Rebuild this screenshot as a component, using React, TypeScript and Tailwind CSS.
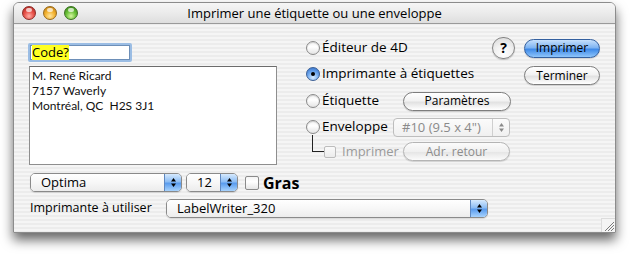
import React from "react";

const ui = "font-['Open_Sans','DejaVu_Sans',sans-serif]";

function Light({ color }: { color: "red" | "yellow" | "green" }) {
  const bg =
    color === "red"
      ? "bg-[radial-gradient(circle_at_50%_75%,#ffb0a8_0%,#e8524a_45%,#a8221c_100%)] border-[#8c2a26]"
      : color === "yellow"
      ? "bg-[radial-gradient(circle_at_50%_75%,#ffe6a0_0%,#f4b331_45%,#b8760c_100%)] border-[#96681a]"
      : "bg-[radial-gradient(circle_at_50%_75%,#d6f7a0_0%,#6cc23a_45%,#2f7e12_100%)] border-[#3a7020]";
  return (
    <div className={`relative w-[14px] h-[14px] rounded-full border ${bg}`}>
      <div className="absolute left-[3px] top-[1px] w-[6px] h-[4px] rounded-full bg-white/70" />
    </div>
  );
}

function Radio({ checked }: { checked?: boolean }) {
  return (
    <div
      className={`w-[14px] h-[14px] shrink-0 rounded-full border flex items-center justify-center ${
        checked
          ? "border-[#3b5f95] bg-[radial-gradient(circle_at_50%_80%,#d8ecff_0%,#6fa8ee_50%,#2c69c4_100%)]"
          : "border-[#8a8a8a] bg-[linear-gradient(180deg,#f2f2f2_0%,#ffffff_40%,#e4e4e4_100%)] shadow-[inset_0_1px_1px_rgba(0,0,0,0.15)]"
      }`}
    >
      {checked && <div className="w-[4px] h-[4px] rounded-full bg-black" />}
    </div>
  );
}

function Button({
  children,
  w,
  primary,
  disabled,
}: {
  children: React.ReactNode;
  w: string;
  primary?: boolean;
  disabled?: boolean;
}) {
  const style = primary
    ? "border-[#34609f] bg-[linear-gradient(180deg,#c6e0fc_0%,#7fb4f2_45%,#3f8ae8_55%,#8ec5fb_100%)] text-black"
    : disabled
    ? "border-[#b4b4b4] bg-[linear-gradient(180deg,#fbfbfb_0%,#f0f0f0_50%,#e6e6e6_55%,#fbfbfb_100%)] text-[#8c8c8c]"
    : "border-[#7d7d7d] bg-[linear-gradient(180deg,#ffffff_0%,#f2f2f2_45%,#e2e2e2_55%,#ffffff_100%)] text-black";
  return (
    <div
      className={`${w} h-[19px] shrink-0 rounded-full border flex items-center justify-center text-[12px] leading-none shadow-[0_1px_1px_rgba(0,0,0,0.15)] ${style}`}
    >
      {children}
    </div>
  );
}

function Arrows({ color = "#000" }: { color?: string }) {
  return (
    <svg width="7" height="11" viewBox="0 0 7 11">
      <path d="M3.5 1 L6 4.5 L1 4.5 Z" fill={color} />
      <path d="M3.5 10 L6 6.5 L1 6.5 Z" fill={color} />
    </svg>
  );
}

function Popup({ w, text }: { w: string; text: string }) {
  return (
    <div
      className={`${w} h-[19px] flex rounded-[5px] border border-[#8a8a8a] shadow-[0_1px_1px_rgba(0,0,0,0.12)] overflow-hidden`}
    >
      <div className="flex-1 flex items-center pl-[10px] text-[13px] leading-none bg-[linear-gradient(180deg,#ffffff_0%,#f7f7f7_50%,#ececec_100%)] text-black">
        {text}
      </div>
      <div className="w-[17px] border-l border-[#5f88c0] flex items-center justify-center bg-[linear-gradient(180deg,#d6eafe_0%,#8dbdf4_45%,#5a9cee_55%,#a8d3fd_100%)]">
        <Arrows />
      </div>
    </div>
  );
}

export default function App() {
  return (
    <div className={`w-[630px] h-[256px] bg-white pt-[2px] pl-[13px] ${ui}`}>
      <div className="relative w-[603px] h-[231px] flex flex-col rounded-t-[6px] border border-[#8c8c8c] shadow-[0_7px_12px_rgba(0,0,0,0.6)] bg-[repeating-linear-gradient(180deg,#ececec_0px,#ececec_2px,#f5f5f5_2px,#f5f5f5_4px)] overflow-hidden">
        {/* title bar */}
        <div className="h-[21px] shrink-0 grid grid-cols-[1fr_auto_1fr] items-center border-b border-[#9a9a9a] bg-[linear-gradient(180deg,#f6f6f6_0%,#ebebeb_50%,#dedede_100%)]">
          <div className="flex items-center gap-[7px] pl-[8px]">
            <Light color="red" />
            <Light color="yellow" />
            <Light color="green" />
          </div>
          <div className="text-[13px] leading-none text-black">
            Imprimer une étiquette ou une enveloppe
          </div>
          <div />
        </div>

        {/* content */}
        <div className="flex flex-col pl-[14px] pr-[15px] pt-[13px]">
          <div className="flex items-start">
            {/* left column */}
            <div className="w-[249px] shrink-0 flex flex-col mt-[6px]">
              <div className="w-[104px] h-[19px] border-[2px] border-[#9bbde4] rounded-[2px] bg-white flex items-center">
                <div className="w-full h-full border border-[#6d8fb8] flex items-center pl-[1px]">
                  <span className="bg-[#ffff22] text-[13px] leading-[15px] text-black">Code?</span>
                </div>
              </div>
              <div className="ml-[1px] mt-[4px] w-[248px] h-[99px] bg-white border border-[#8e8e8e] border-t-[#6c6c6c] pl-[2px] pt-[1px] font-['Lato','Open_Sans',sans-serif] text-[12px] leading-[15px] text-[#111]">
                <div>M. René Ricard</div>
                <div>7157 Waverly</div>
                <div>Montréal, QC&nbsp; H2S 3J1</div>
              </div>
            </div>

            {/* options + buttons */}
            <div className="ml-[29px] flex-1 flex flex-col text-[13.5px] leading-none text-black">
              <div className="h-[20px] mt-[1px] flex items-center">
                <Radio />
                <span className="ml-[2px]">Éditeur de 4D</span>
                <div className="ml-auto w-[23px] h-[22px] rounded-full border border-[#858585] bg-[radial-gradient(circle_at_50%_80%,#ffffff_0%,#f0f0f0_50%,#d6d6d6_100%)] shadow-[0_1px_1px_rgba(0,0,0,0.2)] flex items-center justify-center text-[14px] font-bold leading-none text-black">
                  ?
                </div>
                <div className="ml-[9px]">
                  <Button w="w-[76px]" primary>
                    Imprimer
                  </Button>
                </div>
              </div>
              <div className="h-[20px] mt-[6px] flex items-center">
                <Radio checked />
                <span className="ml-[2px]">Imprimante à étiquettes</span>
                <div className="ml-auto mt-[3px]">
                  <Button w="w-[76px]">Terminer</Button>
                </div>
              </div>
              <div className="h-[20px] mt-[7px] flex items-center">
                <div className="w-[97px] flex items-center">
                  <Radio />
                  <span className="ml-[2px]">Étiquette</span>
                </div>
                <Button w="w-[108px]">Paramètres</Button>
              </div>
              <div className="h-[20px] mt-[6px] flex items-center">
                <div className="w-[87px] flex items-center">
                  <Radio />
                  <span className="ml-[2px]">Enveloppe</span>
                </div>
                <div className="w-[117px] h-[19px] flex rounded-[4px] border border-[#bdbdbd] bg-[linear-gradient(180deg,#fbfbfb,#f0f0f0)]">
                  <div className="flex-1 flex items-center pl-[8px] text-[13px] text-[#8a8a8a]">
                    #10 (9.5 x 4")
                  </div>
                  <div className="w-[17px] border-l border-[#cfcfcf] flex items-center justify-center">
                    <Arrows color="#8a8a8a" />
                  </div>
                </div>
              </div>
              <div className="h-[21px] mt-[4px] flex items-center">
                <div className="w-[97px] h-full flex items-center">
                  <div className="ml-[6px] self-start -mt-[6px] w-[12px] h-[17px] border-l border-b border-[#222]" />
                  <div className="w-[12px] h-[12px] border border-[#bcbcbc] rounded-[2px] bg-[linear-gradient(180deg,#fafafa,#ececec)]" />
                  <span className="ml-[6px] text-[13px] text-[#9a9a9a]">Imprimer</span>
                </div>
                <Button w="w-[107px]" disabled>
                  Adr. retour
                </Button>
              </div>
            </div>
          </div>

          {/* bottom rows */}
          <div className="ml-[2px] mt-[8px] flex items-center">
            <Popup w="w-[152px]" text="Optima" />
            <div className="ml-[4px]">
              <Popup w="w-[52px]" text="12" />
            </div>
            <div className="ml-[7px] w-[14px] h-[14px] rounded-[2px] border border-[#8a8a8a] bg-[linear-gradient(180deg,#f4f4f4,#ffffff_40%,#e6e6e6)]" />
            <span className="ml-[4px] text-[16px] font-bold leading-none text-black">Gras</span>
          </div>
          <div className="ml-[2px] mt-[7px] flex items-center">
            <span className="w-[136px] text-[12.5px] leading-none text-black">Imprimante à utiliser</span>
            <Popup w="w-[322px]" text="LabelWriter_320" />
          </div>
        </div>

        {/* resize grip */}
        <div className="absolute right-0 bottom-0 w-[14px] h-[14px] border-l border-t border-[#dcdcdc] bg-[#f4f4f4]">
          <svg width="13" height="13" viewBox="0 0 13 13">
            <path d="M3 12 L12 3 M6 12 L12 6 M9 12 L12 9" stroke="#7a7a7a" strokeWidth="1" />
          </svg>
        </div>
      </div>
    </div>
  );
}
